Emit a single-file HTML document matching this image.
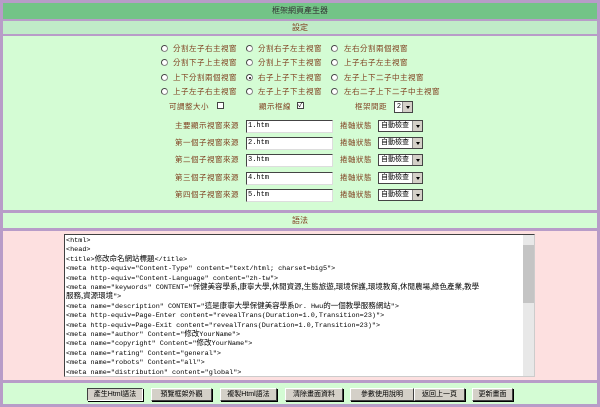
<!DOCTYPE html><html><head><meta charset="utf-8"><style>
*{margin:0;padding:0;box-sizing:border-box}
body{width:600px;height:407px;background:#b89cc8;position:relative;overflow:hidden;font-family:"Liberation Sans","Noto Sans CJK TC",sans-serif;font-size:8px;color:#804020}
.a{position:absolute}
.hd{position:absolute;left:3px;width:594px;text-align:center;font-size:8px}
.r{position:absolute;width:7px;height:7px;border-radius:50%;background:#fff;border:1px solid #888;border-top-color:#444;border-left-color:#444}
.r.on::after{content:"";position:absolute;left:1.5px;top:1.5px;width:2px;height:2px;border-radius:50%;background:#000}
.t{position:absolute;white-space:nowrap;line-height:10px;font-size:7.5px;letter-spacing:0.5px}
.in{position:absolute;height:13px;background:#fff;border:1px solid #444;border-right-color:#ddd;border-bottom-color:#ddd;font-family:"Liberation Mono",monospace;font-size:7px;color:#000;line-height:11px;padding-left:1px}
.sel{position:absolute;height:12px;background:#fff;border:1px solid #444;font-size:7px;color:#000;line-height:10px;padding-left:2px;white-space:nowrap;overflow:hidden}
.sel::after{content:"";position:absolute;right:0;top:0;width:9px;height:10px;background:#d4d0c8;border-left:1px solid #888}
.sel::before{content:"";position:absolute;right:2px;top:4px;border:2px solid transparent;border-top:3px solid #000;z-index:2}
.b{position:absolute;top:388px;height:13px;background:#d4d0c8;border:1px solid #fff;border-right-color:#404040;border-bottom-color:#404040;box-shadow:1px 1px 0 #000;font-size:7px;color:#000;text-align:center;line-height:11px;white-space:nowrap;overflow:hidden}
pre{font-family:"Liberation Mono",monospace;font-size:6.8px;line-height:9.4px;color:#000;padding:2px 0 0 8px;white-space:pre}
pre span{font-family:"Noto Sans CJK TC",sans-serif;font-size:7.5px;line-height:0}
</style></head><body>
<div class="hd" style="top:3px;height:16px;background:#73c487;color:#333;line-height:16px">框架網頁產生器</div>
<div class="hd" style="top:21px;height:13px;background:#c0ebc8;line-height:13px">設定</div>
<div class="a" style="left:3px;top:36px;width:594px;height:174px;background:#d4fcd4"></div>
<div class="hd" style="top:213px;height:15px;background:#d4fcd4;line-height:15px">語法</div>
<div class="a" style="left:3px;top:231px;width:594px;height:149px;background:#fde0e0"></div>
<div class="a" style="left:3px;top:383px;width:594px;height:21px;background:#d4fcd4"></div>

<div class="r" style="left:161px;top:45px"></div><div class="t" style="left:173px;top:44px">分割左子右主視窗</div>
<div class="r" style="left:246px;top:45px"></div><div class="t" style="left:258px;top:44px">分割右子左主視窗</div>
<div class="r" style="left:331px;top:45px"></div><div class="t" style="left:344px;top:44px">左右分割兩個視窗</div>
<div class="r" style="left:161px;top:59px"></div><div class="t" style="left:173px;top:58px">分割下子上主視窗</div>
<div class="r" style="left:246px;top:59px"></div><div class="t" style="left:258px;top:58px">分割上子下主視窗</div>
<div class="r" style="left:331px;top:59px"></div><div class="t" style="left:344px;top:58px">上子右子左主視窗</div>
<div class="r" style="left:161px;top:74px"></div><div class="t" style="left:173px;top:73px">上下分割兩個視窗</div>
<div class="r on" style="left:246px;top:74px"></div><div class="t" style="left:258px;top:73px">右子上子下主視窗</div>
<div class="r" style="left:331px;top:74px"></div><div class="t" style="left:344px;top:73px">左子上下二子中主視窗</div>
<div class="r" style="left:161px;top:88px"></div><div class="t" style="left:173px;top:87px">上子左子右主視窗</div>
<div class="r" style="left:246px;top:88px"></div><div class="t" style="left:258px;top:87px">左子上子下主視窗</div>
<div class="r" style="left:331px;top:88px"></div><div class="t" style="left:344px;top:87px">左右二子上下二子中主視窗</div>

<div class="t" style="left:169px;top:102px">可調整大小</div>
<div class="a" style="left:217px;top:102px;width:7px;height:7px;background:#fff;border:1px solid #444"></div>
<div class="t" style="left:259px;top:102px">顯示框線</div>
<div class="a" style="left:297px;top:102px;width:7px;height:7px;background:#fff;border:1px solid #444;font-size:7px;line-height:5px;color:#000;text-align:center">✓</div>
<div class="t" style="left:355px;top:102px">框架間距</div>
<div class="sel" style="left:394px;top:101px;width:19px">2</div>

<div class="t" style="left:175px;top:121px">主要顯示視窗來源</div>
<div class="t" style="left:175px;top:138px">第一個子視窗來源</div>
<div class="t" style="left:175px;top:155px">第二個子視窗來源</div>
<div class="t" style="left:175px;top:173px">第三個子視窗來源</div>
<div class="t" style="left:175px;top:190px">第四個子視窗來源</div>
<div class="in" style="left:246px;top:120px;width:87px">1.htm</div>
<div class="in" style="left:246px;top:137px;width:87px">2.htm</div>
<div class="in" style="left:246px;top:154px;width:87px">3.htm</div>
<div class="in" style="left:246px;top:172px;width:87px">4.htm</div>
<div class="in" style="left:246px;top:189px;width:87px">5.htm</div>
<div class="t" style="left:340px;top:121px">捲軸狀態</div>
<div class="t" style="left:340px;top:138px">捲軸狀態</div>
<div class="t" style="left:340px;top:155px">捲軸狀態</div>
<div class="t" style="left:340px;top:173px">捲軸狀態</div>
<div class="t" style="left:340px;top:190px">捲軸狀態</div>
<div class="sel" style="left:378px;top:120px;width:45px">自動檢查</div>
<div class="sel" style="left:378px;top:137px;width:45px">自動檢查</div>
<div class="sel" style="left:378px;top:154px;width:45px">自動檢查</div>
<div class="sel" style="left:378px;top:172px;width:45px">自動檢查</div>
<div class="sel" style="left:378px;top:189px;width:45px">自動檢查</div>

<div class="a" style="left:64px;top:234px;width:471px;height:143px;background:#fff;border:1px solid #404040;border-right-color:#ccc;border-bottom-color:#ccc;overflow:hidden">
<div style="position:absolute;right:0;top:0;width:11px;height:141px;background:#e8e8e8"><div style="position:absolute;top:10px;left:0;width:11px;height:58px;background:#c4c4c4"></div></div>
<pre style="position:absolute;left:-7px;top:0">&lt;html&gt;
&lt;head&gt;
&lt;title&gt;<span>修改命名網站標題</span>&lt;/title&gt;
&lt;meta http-equiv="Content-Type" content="text/html; charset=big5"&gt;
&lt;meta http-equiv="Content-Language" content="zh-tw"&gt;
&lt;meta name="keywords" CONTENT="<span>保健美容學系,康寧大學,休閒資源,生態旅遊,環境保護,環境教育,休閒農場,綠色產業,教學</span>
<span>服務,資源環境</span>"&gt;
&lt;meta name="description" CONTENT="<span>這是康寧大學保健美容學系</span>Dr. Hwu<span>的一個教學服務網站</span>"&gt;
&lt;meta http-equiv=Page-Enter content="revealTrans(Duration=1.0,Transition=23)"&gt;
&lt;meta http-equiv=Page-Exit content="revealTrans(Duration=1.0,Transition=23)"&gt;
&lt;meta name="author" Content="<span>修改</span>YourName"&gt;
&lt;meta name="copyright" Content="<span>修改</span>YourName"&gt;
&lt;meta name="rating" Content="general"&gt;
&lt;meta name="robots" Content="all"&gt;
&lt;meta name="distribution" content="global"&gt;</pre></div>

<div class="b" style="left:87px;width:56px;border-color:#404040 #fff #fff #404040">產生Html語法</div>
<div class="b" style="left:151px;width:61px">預覽框架外觀</div>
<div class="b" style="left:220px;width:57px">複製Html語法</div>
<div class="b" style="left:285px;width:58px">清除畫面資料</div>
<div class="b" style="left:350px;width:64px">參數使用說明</div>
<div class="b" style="left:414px;width:51px">返回上一頁</div>
<div class="b" style="left:472px;width:41px">更新畫面</div>
</body></html>
